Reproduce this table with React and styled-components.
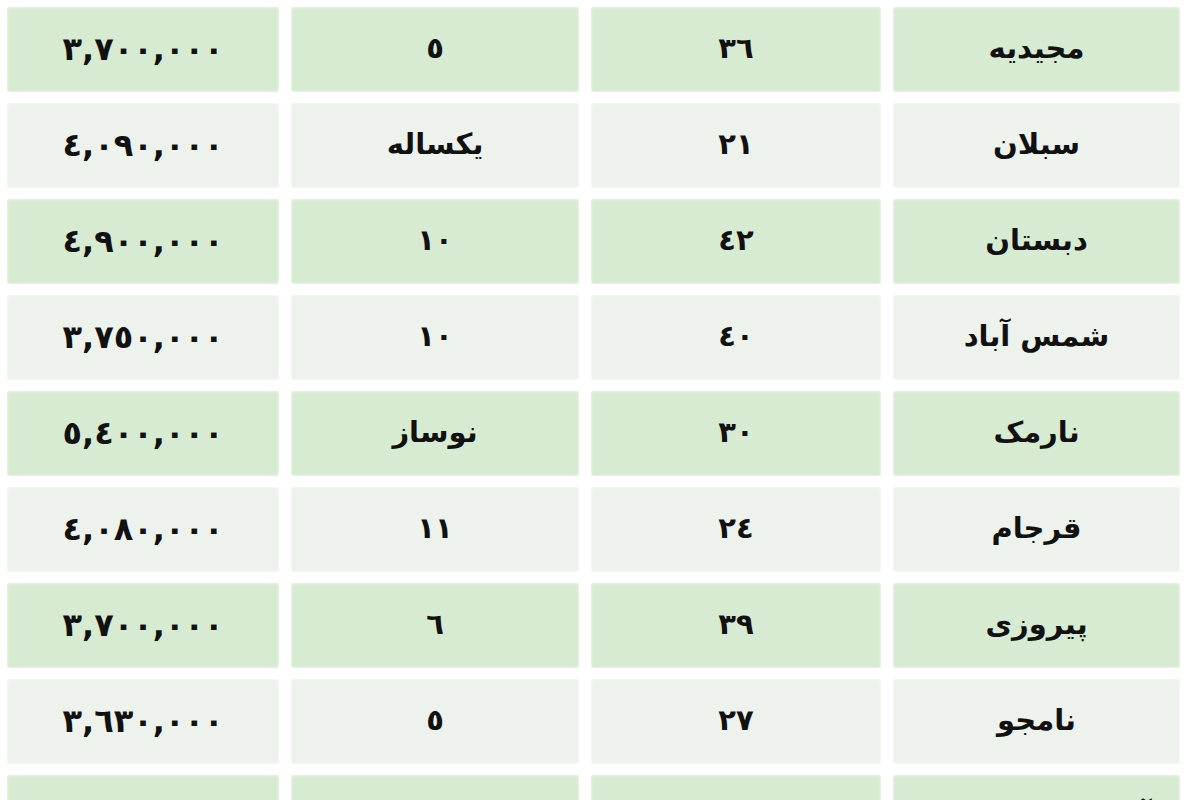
import styled, { createGlobalStyle } from "styled-components";

const GlobalStyle = createGlobalStyle`
  html, body {
    margin: 0;
    padding: 0;
    background: #ffffff;
    overflow: hidden;
  }
`;

const Page = styled.div`
  width: 1200px;
  height: 800px;
  overflow: hidden;
  background: #ffffff;
  direction: rtl;
`;

const Table = styled.div`
  display: grid;
  grid-template-columns: 287px 290px 288px 272px;
  grid-auto-rows: 85px;
  column-gap: 12px;
  row-gap: 11px;
  padding: 7px 20px 0 5px;
`;

const Cell = styled.div`
  display: flex;
  align-items: center;
  justify-content: center;
  background: ${(p) => (p.$shade ? "#d7ebd2" : "#edf2ec")};
  box-shadow: inset 0 0 3px rgba(255, 255, 255, 0.9);
  border-radius: 2px;
  color: #111;
  font-family: "DejaVu Sans", "Noto Sans", sans-serif;
  font-weight: bold;
  font-size: 29px;
  line-height: 1;
  padding-bottom: 2px;
`;

const Digits = styled.span`
  direction: ltr;
  unicode-bidi: isolate;
  font-size: 32px;
  letter-spacing: 4px;
`;

const rows = [
  ["مجیدیه", "٣٦", "٥", "٣,٧٠٠,٠٠٠"],
  ["سبلان", "٢١", "یکساله", "٤,٠٩٠,٠٠٠"],
  ["دبستان", "٤٢", "١٠", "٤,٩٠٠,٠٠٠"],
  ["شمس آباد", "٤٠", "١٠", "٣,٧٥٠,٠٠٠"],
  ["نارمک", "٣٠", "نوساز", "٥,٤٠٠,٠٠٠"],
  ["قرجام", "٢٤", "١١", "٤,٠٨٠,٠٠٠"],
  ["پیروزی", "٣٩", "٦", "٣,٧٠٠,٠٠٠"],
  ["نامجو", "٢٧", "٥", "٣,٦٣٠,٠٠٠"],
  ["آیت الله کاشانی", "٤٢", "یکساله", "٤,٥٠٠,٠٠٠"],
];

export default function App() {
  return (
    <Page>
      <GlobalStyle />
      <Table>
        {rows.map((row, i) =>
          row.map((value, j) => (
            <Cell key={`${i}-${j}`} $shade={i % 2 === 0}>
              {j === 3 ? <Digits>{value}</Digits> : value}
            </Cell>
          ))
        )}
      </Table>
    </Page>
  );
}
